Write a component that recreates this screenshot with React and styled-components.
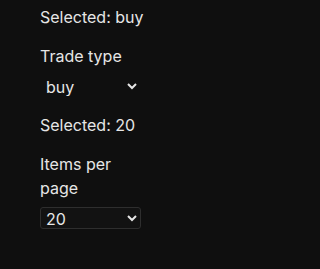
import React, { useState } from "react";
import styled, { createGlobalStyle } from "styled-components";

const Global = createGlobalStyle`
  html, body { margin: 0; padding: 0; background: #0f0f0f; color-scheme: dark; }
  body { font-family: Inter, "Noto Sans", sans-serif; color: #e6e6e6; }
`;

const Page = styled.div`
  width: 300px;
  min-height: 269px;
  box-sizing: border-box;
  padding: 5px 40px;
  display: flex;
  flex-direction: column;
  align-items: flex-start;
`;

const Text = styled.div`
  font-size: 16px;
  line-height: 24px;
  margin-bottom: ${(p) => p.$gap || 0}px;
`;

const Field = styled.div`
  width: 101px;
  display: flex;
  flex-direction: column;
  margin-bottom: ${(p) => p.$gap || 0}px;
`;

const Label = styled.label`
  display: block;
  font-size: 16px;
  line-height: 24px;
  margin-bottom: 7px;
`;

const Select = styled.select`
  width: 101px;
  height: 22px;
  font-family: Inter, "Noto Sans", sans-serif;
  font-size: 16px;
  color: #e6e6e6;
  background: ${(p) => (p.$bare ? "transparent" : "#121212")};
  border: 1px solid ${(p) => (p.$bare ? "transparent" : "#2e2e2e")};
  border-radius: 3px;
  padding: 0 1px;
  outline: none;
`;

export default function App() {
  const [trade, setTrade] = useState("buy");
  const [per, setPer] = useState("20");
  return (
    <Page>
      <Global />
      <Text $gap={15}>Selected: {trade}</Text>
      <Field $gap={16}>
        <Label>Trade type</Label>
        <Select $bare value={trade} onChange={(e) => setTrade(e.target.value)}>
          <option value="buy">buy</option>
          <option value="sell">sell</option>
        </Select>
      </Field>
      <Text $gap={15}>Selected: {per}</Text>
      <Field>
        <Label>Items per page</Label>
        <Select value={per} onChange={(e) => setPer(e.target.value)}>
          <option value="10">10</option>
          <option value="20">20</option>
          <option value="50">50</option>
        </Select>
      </Field>
    </Page>
  );
}
